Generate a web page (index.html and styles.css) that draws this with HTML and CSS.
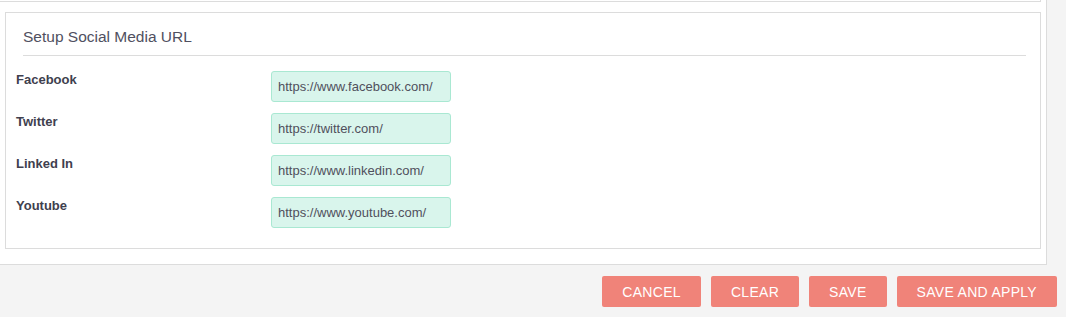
FILE: index.html
```html
<!DOCTYPE html>
<html>
<head>
<meta charset="utf-8">
<link rel="stylesheet" href="styles.css">
</head>
<body>
<div class="panel">
  <div class="prev"></div>
  <div class="box">
    <div class="box-head">Setup Social Media URL</div>
    <div class="row">
      <label class="lbl">Facebook</label>
      <input class="url" type="text" value="https://www.facebook.com/">
    </div>
    <div class="row">
      <label class="lbl">Twitter</label>
      <input class="url" type="text" value="https://twitter.com/">
    </div>
    <div class="row">
      <label class="lbl">Linked In</label>
      <input class="url" type="text" value="https://www.linkedin.com/">
    </div>
    <div class="row">
      <label class="lbl">Youtube</label>
      <input class="url" type="text" value="https://www.youtube.com/">
    </div>
  </div>
</div>
<div class="actions">
  <button class="btn">Cancel</button>
  <button class="btn">Clear</button>
  <button class="btn">Save</button>
  <button class="btn">Save and Apply</button>
</div>
</body>
</html>
```
FILE: styles.css
```css
* { box-sizing: border-box; }
html, body { margin: 0; padding: 0; }
body {
  background: #f4f4f4;
  font-family: "Liberation Sans", Arial, sans-serif;
  color: #444;
}
.panel {
  width: 1047px;
  background: #fff;
  border-right: 1px solid #dcdcdc;
  border-bottom: 1px solid #dcdcdc;
  padding-bottom: 15px;
}
.prev {
  height: 2px;
  margin-right: 5px;
  border-bottom: 1px solid #dcdcdc;
  border-right: 1px solid #dcdcdc;
}
.box {
  margin: 10px 5px 0 5px;
  border: 1px solid #dcdcdc;
  padding: 0 0 20px 0;
}
.box-head {
  margin: 0 14px 0 17px;
  padding: 14px 0 8px 0;
  border-bottom: 1px solid #dcdcdc;
  font-size: 15.5px;
  line-height: 20px;
  color: #505060;
}
.row {
  display: flex;
  align-items: flex-start;
  padding-left: 10px;
  margin-top: 11px;
}
.box-head + .row { margin-top: 15px; }
.lbl {
  width: 255px;
  font-size: 13px;
  font-weight: bold;
  line-height: 17px;
  color: #40404e;
}
.url {
  width: 180px;
  height: 31px;
  padding: 0 6px;
  border: 1px solid #a9e8d2;
  border-radius: 3px;
  background: #d9f5ec;
  font-family: "Liberation Sans", Arial, sans-serif;
  font-size: 13px;
  color: #50505c;
  outline: none;
}
.actions {
  display: flex;
  justify-content: flex-end;
  gap: 10px;
  padding-right: 9px;
  margin-top: 11px;
}
.btn {
  height: 31px;
  padding: 0 20px;
  border: none;
  border-radius: 2px;
  background: #f08379;
  color: #fff;
  font-family: "Liberation Sans", Arial, sans-serif;
  font-size: 14px;
  letter-spacing: 0.3px;
  text-transform: uppercase;
  cursor: pointer;
}
```
